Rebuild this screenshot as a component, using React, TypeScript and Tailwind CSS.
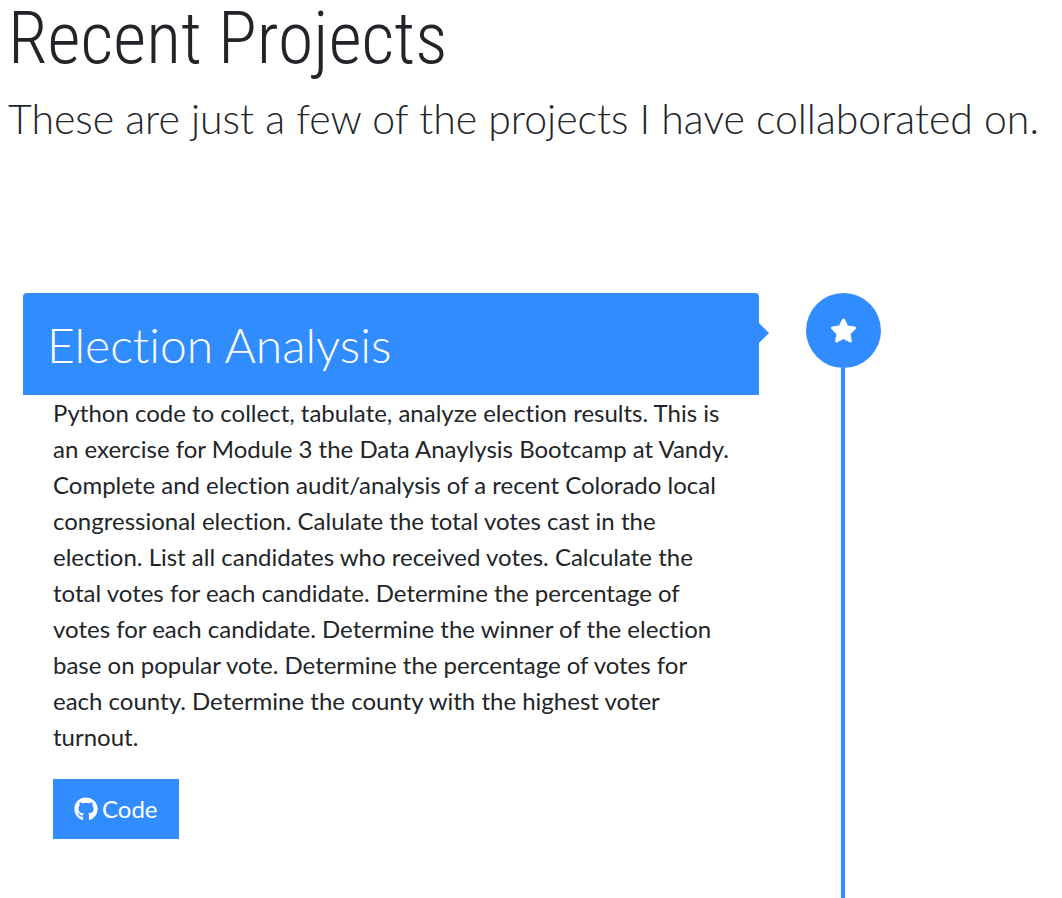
import React from 'react';
import { FaGithub, FaStar } from 'react-icons/fa';

export default function App() {
  return (
    <main className="min-h-screen bg-white pl-2 font-['Lato',sans-serif] text-[#212529] [font-variant-ligatures:none]">
      <header>
        <h1 className="font-['Roboto_Condensed','Roboto',sans-serif] text-[72px] leading-[78px] font-light">
          Recent Projects
        </h1>
        <p className="mt-[10px] text-[41px] leading-[62px] font-light">
          These are just a few of the projects I have collaborated on.
        </p>
      </header>
      <section className="mt-[143px] flex pl-[15px]">
        <article className="w-[736px] shrink-0">
          <div className="relative rounded-t bg-[#318dff] px-6 pt-6 pb-[22px]">
            <h2 className="text-[48px] leading-[56px] font-light text-white">Election Analysis</h2>
            <span className="absolute top-[30px] left-full h-0 w-0 border-y-[10px] border-l-[10px] border-y-transparent border-l-[#318dff]" />
          </div>
          <div className="px-[30px]">
            <p className="text-[24px] leading-[36px]">
              Python code to collect, tabulate, analyze election results. This is an exercise for Module 3 the Data
              Anaylysis Bootcamp at Vandy. Complete and election audit/analysis of a recent Colorado local congressional
              election. Calulate the total votes cast in the election. List all candidates who received votes.
              Calculate the total votes for each candidate. Determine the percentage of votes for each candidate.
              Determine the winner of the election base on popular vote. Determine the percentage of votes for each
              county. Determine the county with the highest voter turnout.
            </p>
            <a href="#code" className="mt-6 inline-flex h-[60px] items-center gap-1 bg-[#318dff] px-[21px] text-[24px] text-white">
              <FaGithub className="size-6" aria-hidden />
              Code
            </a>
          </div>
        </article>
        <div className="ml-[47px] flex min-h-[605px] flex-col">
          <div className="flex size-[75px] items-center justify-center rounded-full bg-[#318dff] text-white">
            <FaStar className="size-[27px]" aria-hidden />
          </div>
          <div className="ml-[35px] w-1 grow bg-[#318dff]" />
        </div>
      </section>
    </main>
  );
}
